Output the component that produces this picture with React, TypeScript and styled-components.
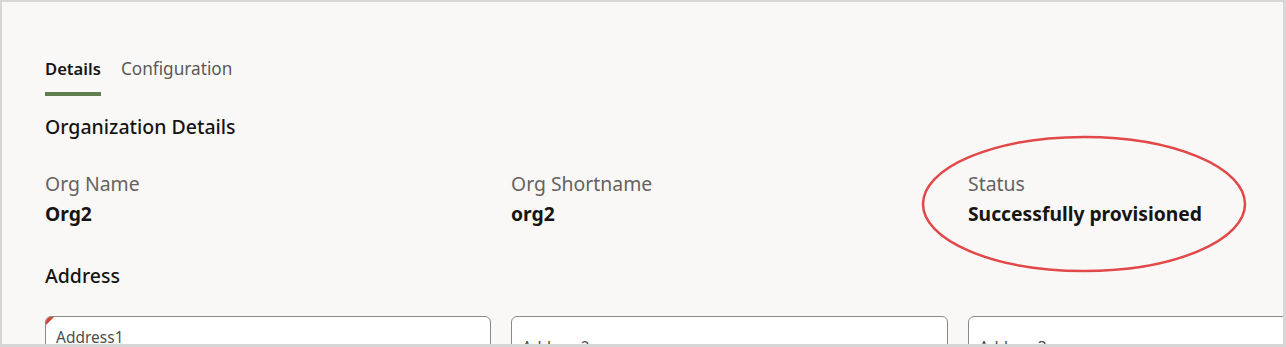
import React from 'react';
import styled, { createGlobalStyle } from 'styled-components';

const GlobalStyle = createGlobalStyle`
  html, body {
    margin: 0;
    padding: 0;
    background: #d6d6d6;
  }
  body {
    font-family: 'Noto Sans', 'Open Sans', sans-serif;
  }
`;

const Frame = styled.div`
  box-sizing: border-box;
  width: 1286px;
  height: 347px;
  border: 3px solid #d6d6d6;
  border-left-width: 2px;
  border-top-width: 2px;
  background: #f9f8f7;
  overflow: hidden;
  position: relative;
`;

const Content = styled.div`
  padding: 55px 0 0 43px;
  width: 1400px;
`;

const Tabs = styled.div`
  display: flex;
  gap: 20px;
`;

const Tab = styled.div<{ $active?: boolean }>`
  font-size: ${({ $active }) => ($active ? '16.6px' : '17.2px')};
  line-height: 24px;
  font-weight: ${({ $active }) => ($active ? 600 : 400)};
  color: ${({ $active }) => ($active ? '#161513' : '#5b5957')};
  padding-bottom: 11px;
  border-bottom: 4px solid ${({ $active }) => ($active ? '#5f7d4f' : 'transparent')};
`;

const SectionTitle = styled.h2`
  margin: 0;
  font-size: 19.5px;
  line-height: 28px;
  font-weight: 500;
  color: #161513;
`;

const Section = styled.div<{ $top: number }>`
  margin-top: ${({ $top }) => $top}px;
`;

const Grid = styled.div`
  display: grid;
  grid-template-columns: 446px 437px 440px;
  column-gap: 20px;
`;

const Field = styled.div`
  display: flex;
  flex-direction: column;
  gap: 3px;
`;

const Label = styled.div`
  font-size: 19.4px;
  line-height: 26px;
  color: #65625f;
`;

const Value = styled.div`
  font-size: 19.3px;
  line-height: 28px;
  font-weight: 700;
  color: #161513;
`;

const InputBox = styled.div<{ $required?: boolean }>`
  position: relative;
  height: 60px;
  background: #fff;
  border: 1px solid #8c8a88;
  border-radius: 6px;
  overflow: hidden;
  box-sizing: border-box;
  padding: 10px 10px 0;

  &::before {
    content: '';
    display: ${({ $required }) => ($required ? 'block' : 'none')};
    position: absolute;
    left: 0;
    top: 0;
    border-top: 8px solid #c74634;
    border-right: 8px solid transparent;
  }
`;

const InputLabel = styled.div<{ $placeholder?: boolean }>`
  font-size: 15.5px;
  line-height: 20px;
  color: #4f4d4b;
  margin-top: ${({ $placeholder }) => ($placeholder ? '10px' : '0')};
`;

const Annotation = styled.svg`
  position: absolute;
  left: 915px;
  top: 132px;
  pointer-events: none;
`;

const App: React.FC = () => {
  return (
    <>
      <GlobalStyle />
      <Frame>
        <Content>
          <Tabs>
            <Tab $active>Details</Tab>
            <Tab>Configuration</Tab>
          </Tabs>
          <Section $top={17}>
            <SectionTitle>Organization Details</SectionTitle>
          </Section>
          <Section $top={30}>
            <Grid>
              <Field>
                <Label>Org Name</Label>
                <Value>Org2</Value>
              </Field>
              <Field>
                <Label>Org Shortname</Label>
                <Value>org2</Value>
              </Field>
              <Field>
                <Label>Status</Label>
                <Value>Successfully provisioned</Value>
              </Field>
            </Grid>
          </Section>
          <Section $top={34}>
            <SectionTitle>Address</SectionTitle>
          </Section>
          <Section $top={26}>
            <Grid>
              <InputBox $required>
                <InputLabel>Address1</InputLabel>
              </InputBox>
              <InputBox>
                <InputLabel $placeholder>Address2</InputLabel>
              </InputBox>
              <InputBox>
                <InputLabel $placeholder>Address3</InputLabel>
              </InputBox>
            </Grid>
          </Section>
        </Content>
        <Annotation width="336" height="142" viewBox="0 0 336 142">
          <ellipse cx="167" cy="70" rx="161" ry="67" fill="none" stroke="#e24848" strokeWidth="2.5" />
        </Annotation>
      </Frame>
    </>
  );
};

export default App;
